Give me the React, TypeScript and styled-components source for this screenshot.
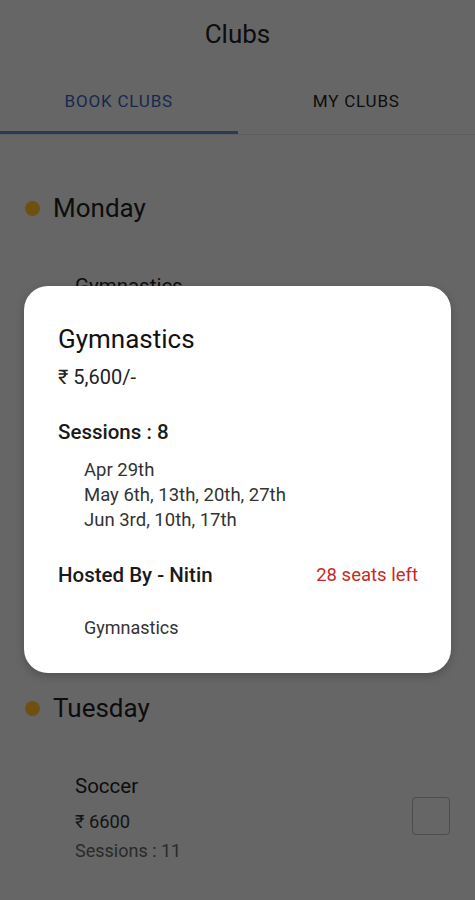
import React from "react";
import styled, { createGlobalStyle } from "styled-components";

const Global = createGlobalStyle`
  html, body { margin: 0; padding: 0; }
  body {
    background: #666666;
    font-family: Roboto, "Noto Sans", "Liberation Sans", sans-serif;
    -webkit-font-smoothing: antialiased;
  }
  * { box-sizing: border-box; }
`;

const Screen = styled.div`
  position: relative;
  width: 475px;
  height: 900px;
  overflow: hidden;
  background: #666666;
`;

const Header = styled.header`
  height: 66px;
  display: flex;
  align-items: center;
  justify-content: center;
  font-size: 26px;
  color: #0d0d0d;
  padding-top: 2px;
`;

const Tabs = styled.nav`
  display: flex;
  border-bottom: 1px solid #5e5e5e;
`;

const Tab = styled.div<{ $active?: boolean }>`
  flex: 1;
  height: 68px;
  padding-top: 4px;
  display: flex;
  align-items: center;
  justify-content: center;
  font-size: 17px;
  font-weight: 400;
  letter-spacing: 0.8px;
  color: ${(p) => (p.$active ? "#16294d" : "#0d0d0d")};
  border-bottom: 3px solid ${(p) => (p.$active ? "#2b3a55" : "transparent")};
`;

const List = styled.div`
  padding-top: 30px;
`;

const DaySection = styled.section`
  padding-top: 27px;
`;

const DayHeading = styled.div`
  display: flex;
  align-items: center;
  gap: 13px;
  padding-left: 25px;
  height: 32px;
  margin-bottom: 21px;
  font-size: 26px;
  color: #0d0d0d;
`;

const Dot = styled.span`
  width: 15px;
  height: 15px;
  border-radius: 50%;
  background: #6f5013;
`;

const Item = styled.div`
  height: 140px;
  display: flex;
  align-items: flex-start;
  justify-content: space-between;
  padding: 29px 25px 23px 75px;
`;

const ItemInfo = styled.div`
  display: flex;
  flex-direction: column;
`;

const ItemName = styled.div`
  font-size: 20.5px;
  line-height: 24px;
  color: #0d0d0d;
`;

const ItemPrice = styled.div`
  margin-top: 12px;
  font-size: 18.3px;
  line-height: 24px;
  color: #141414;
`;

const ItemSessions = styled.div`
  margin-top: 6px;
  font-size: 18px;
  line-height: 22px;
  color: #2a2a2a;
`;

const Checkbox = styled.div`
  margin-top: 23px;
  width: 38px;
  height: 38px;
  border: 1.5px solid #4c4c4c;
  border-radius: 4px;
`;

const Modal = styled.div`
  position: absolute;
  left: 24px;
  top: 286px;
  width: 427px;
  height: 387px;
  background: #fff;
  border-radius: 24px;
  box-shadow: 0 3px 10px rgba(0, 0, 0, 0.22);
  padding: 36px 33px 0 34px;
  display: flex;
  flex-direction: column;
`;

const ModalTitle = styled.div`
  font-size: 26px;
  line-height: 34px;
  color: #111;
`;

const ModalPrice = styled.div`
  margin-top: 9px;
  font-size: 20px;
  line-height: 24px;
  color: #222;
`;

const ModalLabel = styled.div`
  margin-top: 31px;
  font-size: 20.5px;
  line-height: 24px;
  font-weight: 500;
  color: #1a1a1a;
`;

const Dates = styled.div`
  margin-top: 14px;
  padding-left: 26px;
  display: flex;
  flex-direction: column;
`;

const DateLine = styled.div`
  font-size: 18.5px;
  line-height: 25px;
  color: #333;
`;

const HostRow = styled.div`
  margin-top: 30px;
  display: flex;
  align-items: center;
  justify-content: space-between;
`;

const HostName = styled.div`
  font-size: 20.5px;
  line-height: 24px;
  font-weight: 500;
  color: #1a1a1a;
`;

const Seats = styled.div`
  font-size: 18.5px;
  line-height: 24px;
  color: #c62a22;
`;

const Description = styled.div`
  margin-top: 30px;
  padding-left: 26px;
  font-size: 18px;
  line-height: 22px;
  color: #333;
`;

type Club = { name: string; price: string; sessions: number };
const days: { day: string; clubs: Club[] }[] = [
  {
    day: "Monday",
    clubs: [
      { name: "Gymnastics", price: "₹ 5600", sessions: 8 },
      { name: "Chess", price: "₹ 4200", sessions: 8 },
      { name: "Art & Craft", price: "₹ 4800", sessions: 8 },
    ],
  },
  { day: "Tuesday", clubs: [{ name: "Soccer", price: "₹ 6600", sessions: 11 }] },
];

export default function App() {
  return (
    <>
      <Global />
      <Screen>
        <Header>Clubs</Header>
        <Tabs>
          <Tab $active>BOOK CLUBS</Tab>
          <Tab>MY CLUBS</Tab>
        </Tabs>
        <List>
          {days.map((d) => (
            <DaySection key={d.day}>
              <DayHeading>
                <Dot />
                {d.day}
              </DayHeading>
              {d.clubs.map((c) => (
                <Item key={c.name}>
                  <ItemInfo>
                    <ItemName>{c.name}</ItemName>
                    <ItemPrice>{c.price}</ItemPrice>
                    <ItemSessions>Sessions : {c.sessions}</ItemSessions>
                  </ItemInfo>
                  <Checkbox />
                </Item>
              ))}
            </DaySection>
          ))}
        </List>
        <Modal>
          <ModalTitle>Gymnastics</ModalTitle>
          <ModalPrice>₹ 5,600/-</ModalPrice>
          <ModalLabel>Sessions : 8</ModalLabel>
          <Dates>
            <DateLine>Apr 29th</DateLine>
            <DateLine>May 6th, 13th, 20th, 27th</DateLine>
            <DateLine>Jun 3rd, 10th, 17th</DateLine>
          </Dates>
          <HostRow>
            <HostName>Hosted By - Nitin</HostName>
            <Seats>28 seats left</Seats>
          </HostRow>
          <Description>Gymnastics</Description>
        </Modal>
      </Screen>
    </>
  );
}
